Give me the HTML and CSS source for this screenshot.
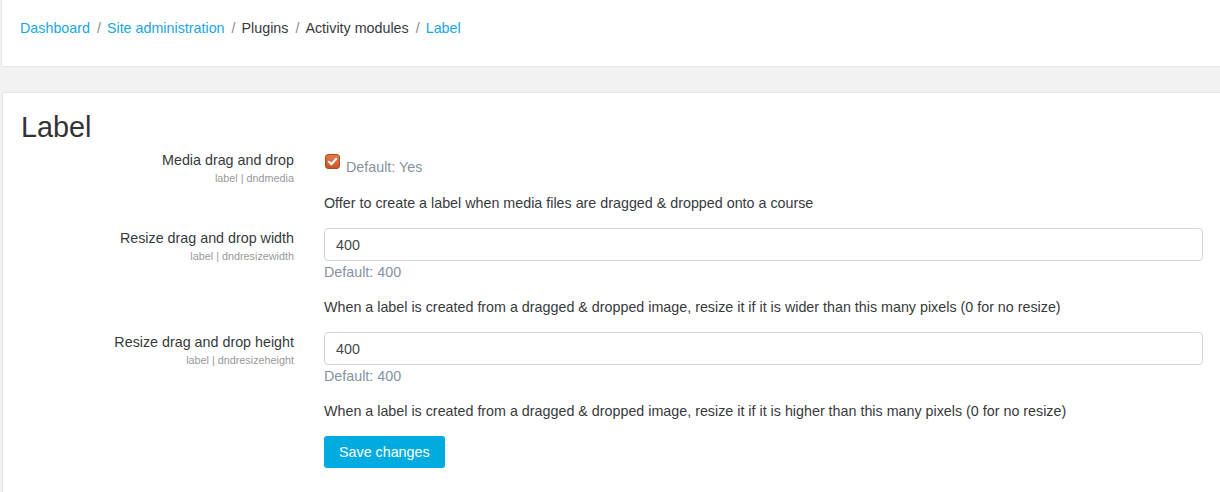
FILE: index.html
```html
<!DOCTYPE html>
<html lang="en">
<head>
<meta charset="utf-8">
<title>Label settings</title>
<link rel="stylesheet" href="styles.css">
</head>
<body>
<header class="page-header">
  <nav class="breadcrumb">
    <a href="#" class="crumb link">Dashboard</a><span class="sep">/</span>
    <a href="#" class="crumb link">Site administration</a><span class="sep">/</span>
    <span class="crumb">Plugins</span><span class="sep">/</span>
    <span class="crumb">Activity modules</span><span class="sep">/</span>
    <a href="#" class="crumb link">Label</a>
  </nav>
</header>
<main class="card">
  <h2 class="title">Label</h2>
  <form class="settings">
    <div class="setting">
      <div class="label-col">
        <div class="setting-name">Media drag and drop</div>
        <div class="setting-id">label | dndmedia</div>
      </div>
      <div class="control-col">
        <div class="checkline">
          <span class="checkbox"><svg width="13" height="13" viewBox="0 0 13 13"><path d="M3 6.8 L5.4 9.2 L10.2 3.8" fill="none" stroke="#fff" stroke-width="2.2" stroke-linecap="round" stroke-linejoin="round"/></svg></span>
          <span class="default-info">Default: Yes</span>
        </div>
        <div class="desc">Offer to create a label when media files are dragged &amp; dropped onto a course</div>
      </div>
    </div>
    <div class="setting">
      <div class="label-col">
        <div class="setting-name">Resize drag and drop width</div>
        <div class="setting-id">label | dndresizewidth</div>
      </div>
      <div class="control-col">
        <input class="text-input" type="text" value="400">
        <div class="default-info">Default: 400</div>
        <div class="desc">When a label is created from a dragged &amp; dropped image, resize it if it is wider than this many pixels (0 for no resize)</div>
      </div>
    </div>
    <div class="setting">
      <div class="label-col">
        <div class="setting-name">Resize drag and drop height</div>
        <div class="setting-id">label | dndresizeheight</div>
      </div>
      <div class="control-col">
        <input class="text-input" type="text" value="400">
        <div class="default-info">Default: 400</div>
        <div class="desc">When a label is created from a dragged &amp; dropped image, resize it if it is higher than this many pixels (0 for no resize)</div>
      </div>
    </div>
    <div class="actions">
      <button type="button" class="btn-primary">Save changes</button>
    </div>
  </form>
</main>
</body>
</html>
```
FILE: styles.css
```css
* { box-sizing: border-box; }
html, body { margin: 0; padding: 0; }
body {
  background: #f2f2f2;
  font-family: "Liberation Sans", Arial, Helvetica, sans-serif;
  font-size: 14.3px;
  line-height: 20px;
  color: #373a3c;
  overflow: hidden;
}
.page-header {
  margin-left: 1px;
  height: 67px;
  background: #fff;
  border-left: 1px solid #e6e6e6;
  border-bottom: 1px solid #e6e6e6;
  padding: 18px 0 0 18px;
}
.breadcrumb { display: flex; align-items: center; font-size: 14.3px; }
.crumb { color: #373a3c; text-decoration: none; }
.crumb.link { color: #1aa6df; }
.sep { color: #8a8a8a; padding: 0 6px 0 7px; }
.card {
  margin: 25px 0 0 2px;
  background: #fff;
  border-left: 1px solid #e6e6e6;
  border-top: 1px solid #e6e6e6;
  padding: 16px 17px 30px 18px;
  min-height: 400px;
}
.title {
  margin: 0 0 5px 0;
  font-size: 28.8px;
  line-height: 36px;
  font-weight: normal;
  color: #333;
}
.setting {
  display: grid;
  grid-template-columns: 273px 1fr;
  column-gap: 30px;
  margin-bottom: 15px;
}
.label-col { text-align: right; }
.setting-name { font-size: 14.3px; line-height: 20px; color: #373a3c; }
.setting-id { font-size: 10.8px; line-height: 16px; color: #999; }
.control-col { display: flex; flex-direction: column; align-items: stretch; }
.checkline {
  display: flex;
  align-items: flex-start;
  gap: 6px;
  padding-top: 7px;
  height: 27px;
}
.checkbox {
  width: 15px;
  height: 15px;
  margin: -3px 0 0 1px;
  border-radius: 3px;
  background: linear-gradient(#e67a4c, #c9552b);
  border: 1px solid #b04a22;
  display: flex;
  align-items: center;
  justify-content: center;
}
.checkbox svg { display: block; }
.default-info { color: #8592a0; font-size: 14.3px; line-height: 20px; }
.desc { margin-top: 16px; font-size: 14.3px; line-height: 20px; color: #373a3c; }
.control-col .default-info + .desc { margin-top: 15px; }
.text-input {
  width: 100%;
  height: 33px;
  border: 1px solid #d4d4d4;
  border-radius: 4px;
  padding: 0 11px;
  font-family: inherit;
  font-size: 14.3px;
  color: #464a4c;
  background: #fff;
  margin: 0 0 1px 0;
}
.checkline + .desc { margin-top: 16px; }
.actions { padding-left: 303px; }
.btn-primary {
  background: #00acdf;
  color: #fff;
  border: 0;
  border-radius: 3px;
  height: 32px;
  padding: 0 15px;
  font-family: inherit;
  font-size: 14.3px;
}
```
